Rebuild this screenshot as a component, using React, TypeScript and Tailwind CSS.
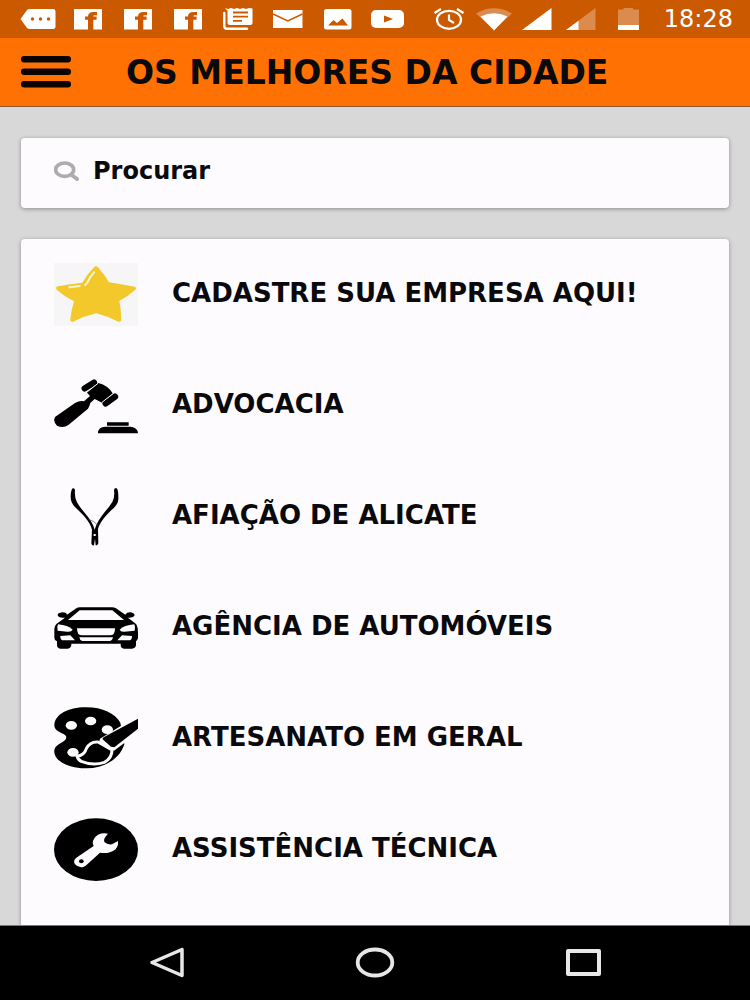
import type { ReactNode } from "react";

function StatusGlyph({ children }: { children: ReactNode }) {
  return (
    <svg viewBox="0 0 50 38" className="h-[38px] w-[50px] shrink-0" fill="#fff" aria-hidden="true">
      {children}
    </svg>
  );
}

function SignalGlyph({ children }: { children: ReactNode }) {
  return (
    <svg viewBox="0 0 44 38" className="h-[38px] w-11 shrink-0" fill="#fff" aria-hidden="true">
      {children}
    </svg>
  );
}

function FacebookGlyph() {
  return (
    <StatusGlyph>
      <path d="M11 9H39V29.500H30.300V19.700H33.600V16.500H30.300Q30 15.200 32 15.200H34V12H30.500Q25 12 25 16.500H22V19.700H25V29.500H11Z" />
    </StatusGlyph>
  );
}

function StatusBar() {
  return (
    <div className="flex h-[38px] items-center justify-between bg-[#ca5900] pl-[13px] pr-[17px] text-white">
      <div className="flex">
        <StatusGlyph>
          <path d="M7.500 19L14 10Q15 9 17 9H40Q42.500 9 42.500 11V27Q42.500 29 40 29H17Q15 29 14 28Z" />
          <g fill="#ca5900">
            <circle cx="19.500" cy="19" r="1.700" />
            <circle cx="27.500" cy="19" r="1.700" />
            <circle cx="35.500" cy="19" r="1.700" />
          </g>
        </StatusGlyph>
        <FacebookGlyph />
        <FacebookGlyph />
        <FacebookGlyph />
        <StatusGlyph>
          <path d="M12 8L15 9L18 8L21 9L24 8L27 9L30 8L33 9L36 8L39.500 8.500V23Q39.500 25 37.500 25H17Q14.500 25 14.500 23V11Z" />
          <path d="M11.300 13V26Q11.300 28.700 14 28.700H34" fill="none" stroke="#fff" strokeWidth="2.400" strokeLinecap="round" />
          <path d="M20 12.500H35M20 16.700H35M20 20.900H29" stroke="#ca5900" strokeWidth="1.800" />
        </StatusGlyph>
        <StatusGlyph>
          <path d="M10 10H39.500V28H10Z" />
          <path d="M10 14L24.800 21L39.500 14" fill="none" stroke="#ca5900" strokeWidth="1.500" />
        </StatusGlyph>
        <StatusGlyph>
          <rect x="11" y="9" width="27.500" height="20.500" rx="2.500" />
          <path d="M15 25.500L20.500 20L24 23L29.500 18.500L35 25.500Z" fill="#ca5900" />
        </StatusGlyph>
        <StatusGlyph>
          <rect x="8" y="10" width="33" height="18" rx="5" />
          <path d="M21 15.500L30 19L21 22.500Z" fill="#ca5900" />
        </StatusGlyph>
      </div>
      <div className="flex items-center">
        <SignalGlyph>
          <g fill="none" stroke="#fff" strokeWidth="2.200">
            <ellipse cx="22" cy="19.800" rx="12" ry="9" />
            <path d="M7.500 13L14 9M36.500 13L30 9M22 14.500V20L27 23" />
          </g>
        </SignalGlyph>
        <SignalGlyph>
          <path d="M5 13.500Q23 3 41 13.500L23 30Z" fillOpacity="0.3" />
          <path d="M9.500 16.500Q23 10 36.500 16.500L23 30.500Z" />
        </SignalGlyph>
        <SignalGlyph>
          <path d="M7 30L36.500 8V30Z" />
        </SignalGlyph>
        <SignalGlyph>
          <path d="M7 30L36.500 8V30Z" fillOpacity="0.3" />
          <path d="M7 30L19.500 20.700V30Z" />
        </SignalGlyph>
        <StatusGlyph>
          <path d="M15 9.500H20.500V8H30V9.500H36V25H15Z" fillOpacity="0.3" />
          <path d="M15 25H36V30H15Z" />
        </StatusGlyph>
        <time className="pl-[11px] font-['DejaVu_Sans',sans-serif] text-2xl leading-none">18:28</time>
      </div>
    </div>
  );
}

function CategoryIcon({ viewBox, children }: { viewBox: string; children: ReactNode }) {
  return (
    <svg viewBox={viewBox} className="h-[63px] w-[84px] shrink-0" aria-hidden="true">
      {children}
    </svg>
  );
}

const star = (
  <CategoryIcon viewBox="162 429 252 189">
    <rect x="162" y="427" width="252" height="192" fill="#f6f6f7" />
    <path
      d="M281 443Q288 435 295 443Q315 465 327 487Q367 493 404 500Q412 504 404 511Q384 529 358 543Q364 574 364 601Q361 608 352 604Q320 588 289 580Q253 588 219 605Q210 606 211 598Q214 570 222 544Q194 530 170 509Q165 501 174 499Q211 491 247 488Q260 464 281 443Z"
      fill="#f2c82a"
    />
    <path d="M282 457Q270 470 262 488M208 502L239 498" fill="none" stroke="#fff8d8" strokeWidth="6" strokeLinecap="round" />
    <path d="M254 497L260 490" stroke="#fff8d8" strokeWidth="5" />
  </CategoryIcon>
);

const gavel = (
  <CategoryIcon viewBox="42 42 252 189">
    <path d="M162 68L134 85M225 110L197 130" stroke="#000" strokeWidth="19" strokeLinecap="round" />
    <path d="M140 97L175 69Q204 76 219 101L186 128Q174 122 164 117L151 129Q148 141 144 146L86 194Q70 207 51 197Q37 183 46 170L105 129Q120 121 132 124L150 108Z" />
    <path d="M139 98L174 70M186 127L219 101" stroke="#fdfbfe" strokeWidth="3" />
    <path d="M201 187H266V197H201ZM174 220Q174 200 196 200H272Q294 203 294 220Z" />
  </CategoryIcon>
);

const pliers = (
  <CategoryIcon viewBox="42 30 252 189">
    <path d="M98 40Q105 39 105 46Q103 67 111 82C124 106 147 124 159 150L164 164L169 150C180 124 201 106 217 81Q225 66 222 46Q222 39 229 39Q236 43 235 73Q234 87 222 98C202 117 181 137 174 162L175 205Q173 212 167 211L165 191L162 211Q155 213 154 205L156 164C150 139 126 116 105 96Q92 83 92 66Q92 46 98 40Z" />
    <path d="M145 133Q160 136 174 151" fill="none" stroke="#555" strokeWidth="2" />
    <ellipse cx="164" cy="180" rx="4" ry="3" fill="#fff" />
  </CategoryIcon>
);

const car = (
  <CategoryIcon viewBox="42 18 252 189">
    <path d="M109 55Q113 52 120 52H216Q223 52 228 55L256 74Q260 66 273 67Q286 71 283 78Q278 84 264 83L288 102Q294 110 294 130V145Q292 151 288 154V166Q286 176 276 176H252Q242 175 242 165V161H94V165Q93 175 83 176H61Q51 175 51 165V154Q43 151 43 143V121Q43 107 50 101L75 83Q55 85 53 76Q52 69 67 67Q79 67 81 74Z" />
    <g fill="#fdfbfe">
      <path d="M119 61H217L252 90H84Z" />
      <path d="M54 103Q84 106 98 119Q95 126 82 125L53 122Q50 111 54 103Z" />
      <path d="M283 103Q252 106 239 119Q241 126 253 125L284 122Q287 111 283 103Z" />
      <path d="M111 115H225Q226 124 221 132Q217 136 210 136H127Q119 136 115 132Q111 124 111 115Z" />
      <path d="M61 138L91 136L105 151H67Q61 149 61 138Z" />
      <path d="M276 138L246 136L232 151H270Q276 149 276 138Z" />
      <path d="M118 142H219Q217 152 210 153H127Q119 151 118 142Z" />
    </g>
  </CategoryIcon>
);

const palette = (
  <CategoryIcon viewBox="42 36 252 189">
    <path d="M43 90C45 57 88 36 139 37C188 37 225 55 241 83L253 148C238 197 184 222 135 220C81 219 39 196 43 165C48 144 79 143 79 127C79 113 43 114 43 90Z" />
    <g fill="#fdfbfe">
      <ellipse cx="94" cy="91" rx="17" ry="13" />
      <ellipse cx="152" cy="78" rx="17" ry="13" />
      <ellipse cx="202" cy="104" rx="17" ry="13" />
      <ellipse cx="99" cy="172" rx="17" ry="13" />
    </g>
    <path d="M180 131L296 60V112L222 167L207 163L178 139Z" fill="#fdfbfe" />
    <path d="M111 183Q132 182 139 161Q150 139 174 141L216 165Q216 190 193 202Q159 213 124 199Q114 194 111 183Z" stroke="#fdfbfe" strokeWidth="9" strokeLinejoin="round" />
    <path d="M191 127L294 71V101L223 157L213 155L187 132Z" />
    <path d="M123 187Q138 182 144 163Q153 148 174 148L207 168Q203 189 187 196Q154 203 123 192Z" />
  </CategoryIcon>
);

const wrench = (
  <CategoryIcon viewBox="42 39 252 189">
    <ellipse cx="168" cy="134" rx="126" ry="94" />
    <path
      fill="#fdfbfe"
      d="M204 86Q189 82 174 89Q159 98 158 115L161 123L109 158Q98 166 105 178Q114 189 130 186L137 182L180 143Q205 148 225 134Q236 124 234 108L216 118Q202 120 194 112Q188 102 204 86Z"
    />
    <ellipse cx="124" cy="169" rx="7" ry="6" />
  </CategoryIcon>
);

const categories = [
  { name: "CADASTRE SUA EMPRESA AQUI!", icon: star },
  { name: "ADVOCACIA", icon: gavel },
  { name: "AFIAÇÃO DE ALICATE", icon: pliers },
  { name: "AGÊNCIA DE AUTOMÓVEIS", icon: car },
  { name: "ARTESANATO EM GERAL", icon: palette },
  { name: "ASSISTÊNCIA TÉCNICA", icon: wrench },
];

export default function App() {
  return (
    <div className="flex min-h-screen flex-col bg-[#d9d8d9] font-['DejaVu_Sans',sans-serif] font-bold text-[#0a090b]">
      <div className="font-normal">
        <StatusBar />
      </div>
      <header className="flex h-[69px] items-center gap-[55px] border-b border-[#8a5a38] bg-[#ff7103] px-[21px]">
        <button type="button" aria-label="Menu" className="shrink-0">
          <svg viewBox="0 0 50 32" className="h-8 w-[50px]" fill="#0a0300" aria-hidden="true">
            <rect width="50" height="6.500" rx="3.200" />
            <rect y="12.500" width="50" height="6.500" rx="3.200" />
            <rect y="25" width="50" height="6.500" rx="3.200" />
          </svg>
        </button>
        <h1 className="whitespace-nowrap text-[33px] leading-none">OS MELHORES DA CIDADE</h1>
      </header>

      <main className="flex flex-1 flex-col gap-[31px] px-[21px] pt-[31px]">
        <label className="flex h-[70px] items-center gap-[14px] rounded-sm bg-[#fdfbfe] px-[33px] pb-1 shadow-[0_1px_4px_rgba(0,0,0,0.35)]">
          <svg viewBox="0 0 75 60" className="h-5 w-[25px] shrink-0" fill="none" stroke="#adabae" aria-hidden="true">
            <ellipse cx="32" cy="26" rx="27" ry="20" strokeWidth="11" />
            <path d="M53 42L69 54" strokeWidth="12" strokeLinecap="round" />
          </svg>
          <input
            type="search"
            aria-label="Procurar"
            placeholder="Procurar"
            className="min-w-0 flex-1 bg-transparent text-2xl leading-8 outline-none placeholder:text-[#0a090b] placeholder:opacity-100"
          />
        </label>

        <ul className="flex-1 rounded-t-sm bg-[#fdfbfe] pb-5 shadow-[0_1px_4px_rgba(0,0,0,0.35)]">
          {categories.map(({ name, icon }) => (
            <li key={name}>
              <a href="#" className="flex h-[111px] items-center gap-[34px] px-[33px]">
                {icon}
                <span className="pb-1 text-[26px] leading-7">{name}</span>
              </a>
            </li>
          ))}
        </ul>
      </main>

      <nav className="grid h-[75px] grid-cols-3 border-t border-[#77777a] bg-black px-16">
        <button type="button" aria-label="Voltar" className="flex items-center justify-center">
          <svg viewBox="0 0 40 32" className="h-8 w-10" fill="none" stroke="#e8e6e8" strokeWidth="3.500" strokeLinejoin="round" aria-hidden="true">
            <path d="M4 15.500L34 2.500V28.500Z" />
          </svg>
        </button>
        <button type="button" aria-label="Início" className="flex items-center justify-center">
          <svg viewBox="0 0 40 32" className="h-8 w-10" fill="none" stroke="#e8e6e8" strokeWidth="3.800" aria-hidden="true">
            <ellipse cx="20" cy="15.500" rx="17.300" ry="13" />
          </svg>
        </button>
        <button type="button" aria-label="Aplicativos recentes" className="flex items-center justify-center">
          <svg viewBox="0 0 40 32" className="h-8 w-10" fill="none" stroke="#e8e6e8" strokeWidth="4" strokeLinejoin="round" aria-hidden="true">
            <rect x="6" y="4" width="31" height="23" />
          </svg>
        </button>
      </nav>
    </div>
  );
}
